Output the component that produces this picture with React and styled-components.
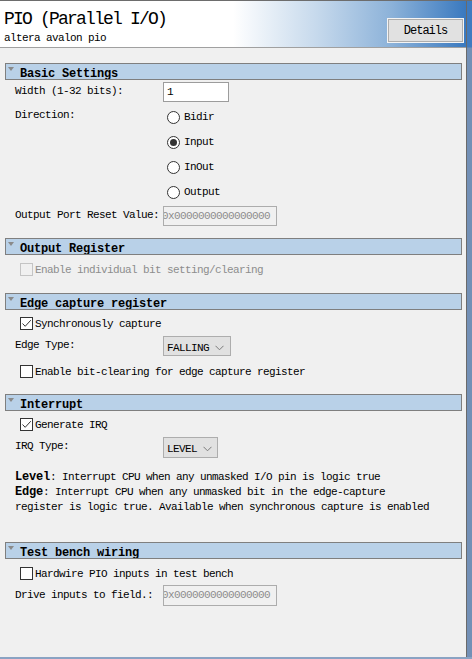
import React from 'react';
import styled, { createGlobalStyle } from 'styled-components';

const FONT = `"Liberation Mono", "Noto Sans CJK SC", monospace`;

const Global = createGlobalStyle`
  html, body { margin: 0; padding: 0; background: #f0f0f0; }
  body { font-family: ${FONT}; font-size: 11px; letter-spacing: -0.6px; color: #000; }
  * { box-sizing: border-box; }
`;

const Frame = styled.div`
  width: 472px;
  height: 659px;
  display: flex;
  border-top: 1px solid #6d6d6d;
  border-bottom: 2px solid #8aa3c3;
  background: #f0f0f0;
  overflow: hidden;
`;

const Main = styled.div`
  flex: 1;
  min-width: 0;
  display: flex;
  flex-direction: column;
`;

const RightEdge = styled.div`
  width: 6px;
  border-left: 1px solid #6a6a6a;
  background: linear-gradient(to bottom, #3f7bc0 0, #3f7bc0 46px, #7390b6 47px, #7390b6 100%);
`;

const Header = styled.header`
  height: 47px;
  flex: none;
  border-bottom: 1px solid #a0a0a0;
  background: linear-gradient(to right, #fff 0%, #fff 50%, #c6d9ec 68%, #8cb2d9 84%, #3a79bf 100%);
  display: flex;
  justify-content: space-between;
  align-items: flex-start;
  padding: 8px 3px 0 4px;
`;

const TitleBlock = styled.div`
  display: flex;
  flex-direction: column;
`;

const Title = styled.h1`
  margin: 0;
  font-size: 18px;
  letter-spacing: -1.8px;
  line-height: 20px;
  font-weight: normal;
`;

const Subtitle = styled.div`
  margin-top: 2px;
  line-height: 14px;
`;

const DetailsButton = styled.button`
  margin-top: 10px;
  width: 75px;
  height: 23px;
  font-family: ${FONT};
  font-size: 12px;
  letter-spacing: -1px;
  color: #000;
  background: #e1e1e1;
  border: 1px solid #adadad;
  box-shadow: 0 0 0 1px #f4f4f4;
  padding: 1px 0 0;
`;

const Body = styled.div`
  flex: 1;
  padding: 0 4px 0 5px;
  display: flex;
  flex-direction: column;
`;

const Bar = styled.div`
  margin-top: ${p => p.$mt}px;
  height: 17px;
  border: 1px solid #7f7f7f;
  background: #b9d1e8;
  display: flex;
  align-items: flex-start;
  overflow: hidden;
`;

const Caret = styled.span`
  width: 0;
  height: 0;
  margin: 3px 0 0 2px;
  border-left: 3.5px solid transparent;
  border-right: 3.5px solid transparent;
  border-top: 4px solid #8a8a8a;
`;

const BarTitle = styled.span`
  margin-left: 6px;
  font-size: 12px;
  font-weight: bold;
  letter-spacing: -0.2px;
  line-height: 15px;
  padding-top: 3px;
`;

const Row = styled.div`
  margin-top: ${p => p.$mt || 0}px;
  padding-left: 10px;
  display: flex;
  align-items: flex-start;
  min-height: 20px;
`;

const Label = styled.div`
  width: 148px;
  flex: none;
  line-height: 16px;
  margin-top: ${p => p.$mt || 1}px;
`;

const TextInput = styled.div`
  width: ${p => p.$w}px;
  height: ${p => p.$h || 20}px;
  border: 1px solid ${p => (p.$disabled ? '#acacac' : '#9c9c9c')};
  background: ${p => (p.$disabled ? '#f0f0f0' : '#fff')};
  color: ${p => (p.$disabled ? '#8d8d8d' : '#000')};
  line-height: 19px;
  padding-left: ${p => (p.$disabled ? 0 : 3)}px;
  overflow: hidden;
  white-space: nowrap;
`;

const Scrolled = styled.span`
  display: inline-block;
  margin-left: -2px;
`;

const RadioGroup = styled.div`
  display: flex;
  flex-direction: column;
  padding-left: 4px;
`;

const RadioItem = styled.label`
  height: 25px;
  display: flex;
  align-items: center;
  gap: 4px;
  padding-top: 1px;
`;

const RadioCircle = styled.span`
  width: 13px;
  height: 13px;
  border-radius: 50%;
  border: 1px solid #333;
  background: #fff;
  display: flex;
  align-items: center;
  justify-content: center;
  &::after {
    content: '';
    width: 7px;
    height: 7px;
    border-radius: 50%;
    background: ${p => (p.$on ? '#333' : 'transparent')};
  }
`;

const CheckRow = styled.label`
  margin-top: ${p => p.$mt || 0}px;
  padding-left: 15px;
  height: 20px;
  display: flex;
  align-items: center;
  gap: 2px;
  color: ${p => (p.$disabled ? '#8d8d8d' : '#000')};
`;

const CheckText = styled.span`
  padding-top: 1px;
`;

const Box = styled.span`
  width: 13px;
  height: 13px;
  flex: none;
  border: 1px solid ${p => (p.$disabled ? '#c4c4c4' : '#333')};
  background: ${p => (p.$disabled ? '#f0f0f0' : '#fff')};
  display: flex;
  align-items: center;
  justify-content: center;
`;

const Select = styled.div`
  width: ${p => p.$w}px;
  height: ${p => p.$h || 20}px;
  border: 1px solid #adadad;
  background: #e1e1e1;
  display: flex;
  align-items: center;
  padding: 3px 0 0 3px;
  gap: 6px;
`;

const Desc = styled.div`
  margin-top: ${p => p.$mt}px;
  padding-left: 10px;
  line-height: 15px;
  white-space: pre;
`;

const Strong = styled.b`
  font-size: 12px;
  letter-spacing: -0.2px;
`;

const Check = ({ on, disabled, children, mt }) => (
  <CheckRow $mt={mt} $disabled={disabled}>
    <Box $disabled={disabled}>
      {on && (
        <svg width="11" height="11" viewBox="0 0 11 11">
          <polyline points="1.5,5.5 4.2,8.3 9.8,2.2" fill="none" stroke="#333" strokeWidth="1" />
        </svg>
      )}
    </Box>
    <CheckText>{children}</CheckText>
  </CheckRow>
);

const Chevron = () => (
  <svg width="9" height="6" viewBox="0 0 9 6">
    <polyline points="0.5,0.8 4.5,4.8 8.5,0.8" fill="none" stroke="#7a7a7a" strokeWidth="1" />
  </svg>
);

const SectionBar = ({ title, mt }) => (
  <Bar $mt={mt}>
    <Caret />
    <BarTitle>{title}</BarTitle>
  </Bar>
);

export default function App() {
  const dirs = ['Bidir', 'Input', 'InOut', 'Output'];
  return (
    <>
      <Global />
      <Frame>
        <Main>
          <Header>
            <TitleBlock>
              <Title>PIO (Parallel I/O)</Title>
              <Subtitle>altera avalon pio</Subtitle>
            </TitleBlock>
            <DetailsButton>Details</DetailsButton>
          </Header>
          <Body>
            <SectionBar title="Basic Settings" mt={15} />
            <Row $mt={2}>
              <Label>Width (1-32 bits):</Label>
              <TextInput $w={66}>1</TextInput>
            </Row>
            <Row $mt={2}>
              <Label $mt={3}>Direction:</Label>
              <RadioGroup>
                {dirs.map(d => (
                  <RadioItem key={d}>
                    <RadioCircle $on={d === 'Input'} />
                    <span>{d}</span>
                  </RadioItem>
                ))}
              </RadioGroup>
            </Row>
            <Row $mt={2}>
              <Label>Output Port Reset Value:</Label>
              <TextInput $w={114} $disabled>
                <Scrolled>0x0000000000000000</Scrolled>
              </TextInput>
            </Row>
            <SectionBar title="Output Register" mt={12} />
            <Check disabled mt={4}>Enable individual bit setting/clearing</Check>

            <SectionBar title="Edge capture register" mt={14} />
            <Check on mt={3}>Synchronously capture</Check>
            <Row $mt={3}>
              <Label>Edge Type:</Label>
              <Select $w={68}>
                <span>FALLING</span>
                <Chevron />
              </Select>
            </Row>
            <Check mt={5}>Enable bit-clearing for edge capture register</Check>

            <SectionBar title="Interrupt" mt={13} />
            <Check on mt={3}>Generate IRQ</Check>
            <Row $mt={3}>
              <Label>IRQ Type:</Label>
              <Select $w={55} $h={21}>
                <span>LEVEL</span>
                <Chevron />
              </Select>
            </Row>
            <Desc $mt={12}>
              <Strong>Level</Strong>: Interrupt CPU when any unmasked I/O pin is logic true{'\n'}
              <Strong>Edge</Strong>: Interrupt CPU when any unmasked bit in the edge-capture{'\n'}
              register is logic true. Available when synchronous capture is enabled
            </Desc>

            <SectionBar title="Test bench wiring" mt={27} />
            <Check mt={4}>Hardwire PIO inputs in test bench</Check>
            <Row $mt={2}>
              <Label $mt={2}>Drive inputs to field.:</Label>
              <TextInput $w={114} $h={21} $disabled>
                <Scrolled>0x0000000000000000</Scrolled>
              </TextInput>
            </Row>
          </Body>
        </Main>
        <RightEdge />
      </Frame>
    </>
  );
}
